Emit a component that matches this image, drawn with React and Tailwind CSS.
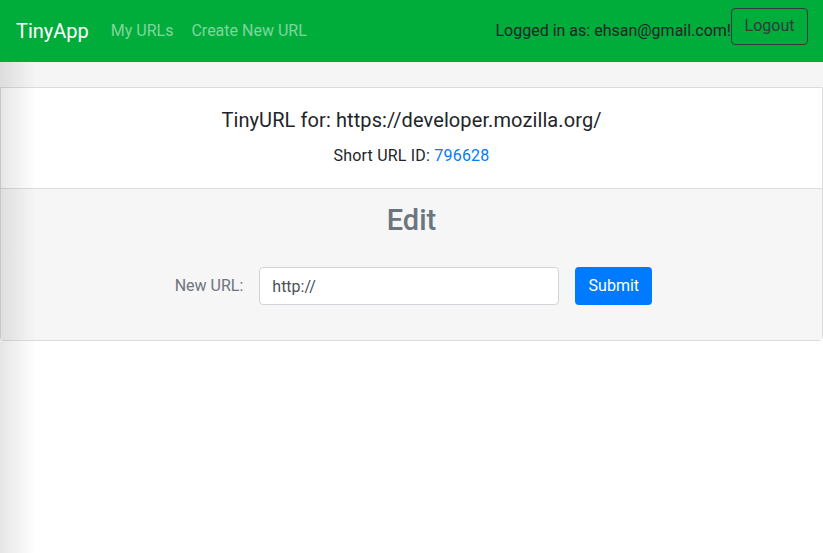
import React from 'react';

const font = { fontFamily: 'Roboto, "Liberation Sans", Arial, sans-serif' };

const Navbar = () => (
    <nav className="h-[62px] bg-[#00ad3a] flex items-center px-4">
        <span className="text-white text-[20px] mr-6">TinyApp</span>
        <div className="flex items-center gap-[18px] text-[16px] text-white/50">
            <a href="#" className="-ml-[2px]">My URLs</a>
            <a href="#">Create New URL</a>
        </div>
        <div className="ml-auto self-start mt-2 flex items-start">
            <span className="text-[16px] leading-[24px] text-[#212529] mt-[11px]">Logged in as: ehsan@gmail.com!</span>
            <button className="h-[37px] w-[77px] mr-[-1px] border border-[#343a40] rounded text-[16px] leading-[24px] pb-[1px] text-[#343a40]">
                Logout
            </button>
        </div>
    </nav>
);

export default function App() {
    return (
        <div className="relative min-h-[553px] bg-white text-[#212529]" style={font}>
            <Navbar />

            <div className="h-[25px] bg-[#f5f5f5]" />

            {/* Card */}
            <div className="border border-[#dcdcdc] rounded-b-[4px]">
                <div className="h-[100px] bg-white flex flex-col items-center pt-[19px]">
                    <h5 className="text-[20px] font-normal leading-[26px] tracking-[0.1px]">
                        TinyURL for: https://developer.mozilla.org/
                    </h5>
                    <p className="text-[16px] mt-[13px] leading-[20px] tracking-[0.2px]">
                        Short URL ID: <a href="#" className="text-[#007bff]">796628</a>
                    </p>
                </div>
                <div className="h-[152px] bg-[#f6f6f6] border-t border-[#dcdcdc] flex flex-col items-center pt-[13px]">
                    <h3 className="text-[29px] font-medium text-[#6c757d] leading-[36px]">Edit</h3>
                    <form className="flex items-center mt-[29px] ml-[4px]">
                        <label className="text-[16px] text-[#6c757d] mr-4">New URL:</label>
                        <input
                            type="text"
                            defaultValue="http://"
                            className="w-[300px] h-[38px] px-3 bg-white border border-[#ced4da] rounded text-[16px] text-[#495057] outline-none"
                        />
                        <button type="button" className="ml-4 h-[38px] w-[77px] bg-[#007bff] text-white text-[16px] font-normal rounded">
                            Submit
                        </button>
                    </form>
                </div>
            </div>

            {/* window edge shadow */}
            <div className="pointer-events-none absolute left-0 top-[62px] bottom-0 w-[36px] bg-gradient-to-r from-black/10 to-transparent" />
        </div>
    );
}
